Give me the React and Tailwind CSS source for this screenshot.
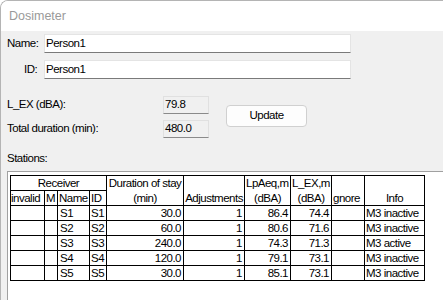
import React from 'react'

const rows = [
  { name: 'S1', id: 'S1', dur: '30.0', adj: '1', lp: '86.4', lex: '74.4', info: 'M3 inactive' },
  { name: 'S2', id: 'S2', dur: '60.0', adj: '1', lp: '80.6', lex: '71.6', info: 'M3 inactive' },
  { name: 'S3', id: 'S3', dur: '240.0', adj: '1', lp: '74.3', lex: '71.3', info: 'M3 active' },
  { name: 'S4', id: 'S4', dur: '120.0', adj: '1', lp: '79.1', lex: '73.1', info: 'M3 inactive' },
  { name: 'S5', id: 'S5', dur: '30.0', adj: '1', lp: '85.1', lex: '73.1', info: 'M3 inactive' },
]

// no narrow face installed, so squeeze Liberation Sans a bit
const narrow = "[font-family:'Liberation_Sans',Arial,sans-serif] text-[11.5px] tracking-[-0.5px]"

function Field({ value }) {
  return (
    <div className="h-[19px] w-[307px] bg-white border border-[#e4e4e4] border-b-[#7a7a7a] flex items-center pl-[1px] text-black">
      {value}
    </div>
  )
}

function ReadBox({ value }) {
  return (
    <div className="h-[18px] w-[46px] bg-[#f0f0f0] border border-[#e0e0e0] border-b-[#8a8a8a] flex items-center pl-[1px] text-black">
      {value}
    </div>
  )
}

function StationsTable() {
  const cell = 'border-x border-black p-0 h-[15px] leading-[14px] whitespace-nowrap overflow-hidden font-normal'
  return (
    <table className="table-fixed border-collapse w-[414px] text-black">
      <colgroup>
        <col className="w-[34px]" />
        <col className="w-[13px]" />
        <col className="w-[32px]" />
        <col className="w-[17px]" />
        <col className="w-[77px]" />
        <col className="w-[61px]" />
        <col className="w-[46px]" />
        <col className="w-[41px]" />
        <col className="w-[33px]" />
        <col className="w-[60px]" />
      </colgroup>
      <thead>
        <tr>
          <th colSpan={4} className={`${cell} border-t border-b text-center`}>Receiver</th>
          <th className={`${cell} border-t text-center`}>Duration of stay</th>
          <th className={`${cell} border-t`}></th>
          <th className={`${cell} border-t text-left pl-[1px]`}>LpAeq,m</th>
          <th className={`${cell} border-t text-left pl-[1px]`}>L_EX,m</th>
          <th className={`${cell} border-t`}></th>
          <th className={`${cell} border-t`}></th>
        </tr>
        <tr>
          <th className={`${cell} border-b text-left`}>invalid</th>
          <th className={`${cell} border-b text-left pl-[1px]`}>M</th>
          <th className={`${cell} border-b text-left pl-[1px]`}>Name</th>
          <th className={`${cell} border-b text-left pl-[1px]`}>ID</th>
          <th className={`${cell} border-b text-center`}>(min)</th>
          <th className={`${cell} border-b text-center`}>Adjustments</th>
          <th className={`${cell} border-b text-center`}>(dBA)</th>
          <th className={`${cell} border-b text-center`}>(dBA)</th>
          <th className={`${cell} border-b text-left pl-[1px]`}>gnore</th>
          <th className={`${cell} border-b text-center`}>Info</th>
        </tr>
      </thead>
      <tbody>
        {rows.map((r) => (
          <tr key={r.name}>
            <td className={`${cell} border-b`}></td>
            <td className={`${cell} border-b`}></td>
            <td className={`${cell} border-b pl-[2px]`}>{r.name}</td>
            <td className={`${cell} border-b pl-[1px]`}>{r.id}</td>
            <td className={`${cell} border-b text-right pr-[2px]`}>{r.dur}</td>
            <td className={`${cell} border-b text-right pr-[2px]`}>{r.adj}</td>
            <td className={`${cell} border-b text-right pr-[2px]`}>{r.lp}</td>
            <td className={`${cell} border-b text-right pr-[2px]`}>{r.lex}</td>
            <td className={`${cell} border-b`}></td>
            <td className={`${cell} border-b pl-[1px]`}>{r.info}</td>
          </tr>
        ))}
      </tbody>
    </table>
  )
}

export default function App() {
  return (
    <div className="w-[443px] h-[300px] overflow-hidden bg-white">
      <div className="h-[320px] w-[460px] border-l border-t border-[#b4b4b4] rounded-tl-[8px] overflow-hidden flex flex-col">
        <div className="h-[30px] shrink-0 bg-white flex items-center pl-[8px] text-[12.5px] text-[#9a9a9a] [font-family:'Liberation_Sans',Arial,sans-serif]">
          Dosimeter
        </div>
        <div className={`flex-1 bg-[#f0f0f0] pt-[3px] text-black ${narrow}`}>
          <div className="flex items-center">
            <span className="w-[43px] pl-[6px]">Name:</span>
            <Field value="Person1" />
          </div>
          <div className="flex items-center mt-[7px]">
            <span className="w-[43px] pl-[23px]">ID:</span>
            <Field value="Person1" />
          </div>

          <div className="flex items-center mt-[17px]">
            <div className="flex flex-col gap-[6px]">
              <div className="flex items-center">
                <span className="w-[162px] pl-[6px]">L_EX (dBA):</span>
                <ReadBox value="79.8" />
              </div>
              <div className="flex items-center">
                <span className="w-[162px] pl-[6px]">Total duration (min):</span>
                <ReadBox value="480.0" />
              </div>
            </div>
            <button className="ml-[17px] -mt-[3px] w-[81px] h-[22px] bg-[#fdfdfd] border border-[#d0d0d0] rounded-[4px] text-black">
              Update
            </button>
          </div>

          <div className="pl-[6px] mt-[12px] h-[16px] leading-[16px]">Stations:</div>

          <div className="ml-[6px] mt-[5px] h-[200px] bg-white border-l border-t border-[#a0a0a0] pl-[2px] pt-[3px]">
            <StationsTable />
          </div>
        </div>
      </div>
    </div>
  )
}
